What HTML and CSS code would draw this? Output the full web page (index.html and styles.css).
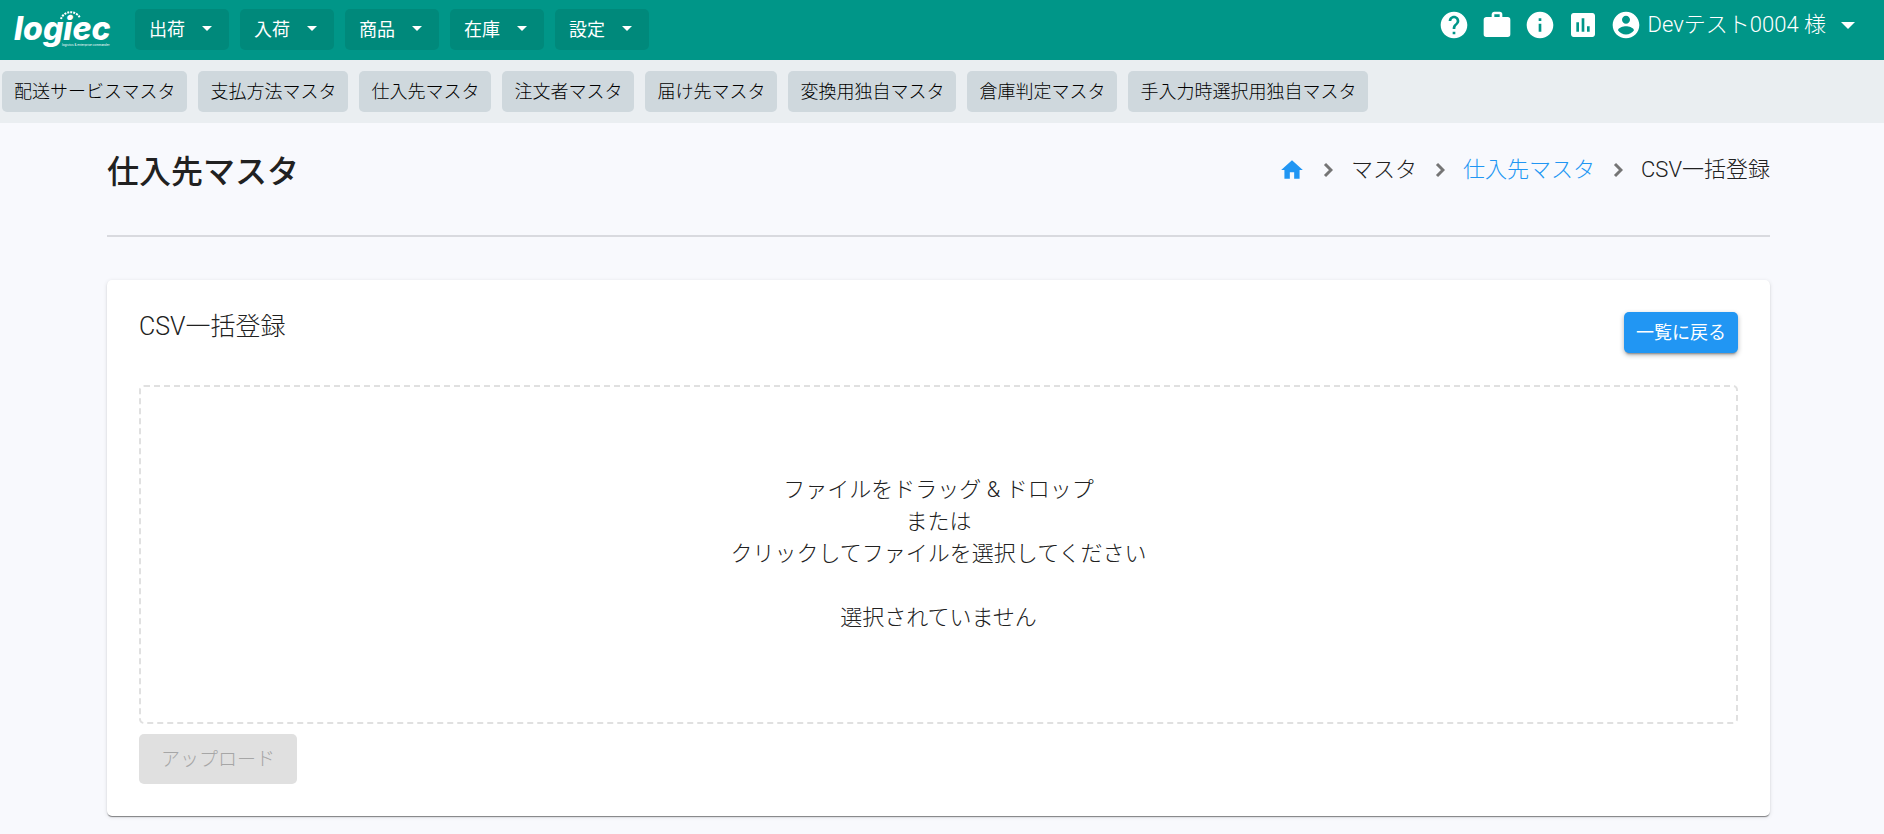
FILE: index.html
```html
<!DOCTYPE html>
<html lang="ja">
<head>
<meta charset="utf-8">
<meta name="viewport" content="width=device-width, initial-scale=1">
<title>仕入先マスタ | CSV一括登録</title>
<link rel="stylesheet" href="styles.css">
</head>
<body>
<header class="topbar">
  <a class="logo" href="#" aria-label="logiec">
    <svg width="106" height="60" viewBox="0 0 106 60">
      <path class="logo-arc" d="M51 19A10 9 0 0 1 70 18"/>
      <text class="logo-name" x="4" y="40">logiec</text>
      <text class="logo-tag" x="52" y="46">logistics &amp; enterprise commander</text>
    </svg>
  </a>
  <nav class="menu">
    <button class="menu-button" type="button">出荷<span class="caret"></span></button>
    <button class="menu-button" type="button">入荷<span class="caret"></span></button>
    <button class="menu-button" type="button">商品<span class="caret"></span></button>
    <button class="menu-button" type="button">在庫<span class="caret"></span></button>
    <button class="menu-button" type="button">設定<span class="caret"></span></button>
  </nav>
  <div class="tools">
    <a class="tool" href="#" aria-label="ヘルプ"><svg viewBox="0 0 24 24"><path d="M12 2C6.480 2 2 6.480 2 12s4.480 10 10 10 10-4.480 10-10S17.520 2 12 2zm1 17h-2v-2h2v2zm2.070-7.750l-.9.920C13.450 12.900 13 13.500 13 15h-2v-.5c0-1.100.45-2.100 1.170-2.830l1.240-1.260c.37-.36.59-.86.59-1.410 0-1.100-.9-2-2-2s-2 .9-2 2H8c0-2.210 1.790-4 4-4s4 1.790 4 4c0 .88-.36 1.680-.93 2.250z"/></svg></a>
    <a class="tool" href="#" aria-label="業務"><svg viewBox="0 0 24 24"><path d="M10 2h4a2 2 0 0 1 2 2v2h4a2 2 0 0 1 2 2v11a2 2 0 0 1-2 2H4a2 2 0 0 1-2-2V8c0-1.110.89-2 2-2h4V4c0-1.110.89-2 2-2m4 4V4h-4v2h4z"/></svg></a>
    <a class="tool" href="#" aria-label="お知らせ"><svg viewBox="0 0 24 24"><path d="M12 2C6.480 2 2 6.480 2 12s4.480 10 10 10 10-4.480 10-10S17.520 2 12 2zm1 15h-2v-6h2v6zm0-8h-2V7h2v2z"/></svg></a>
    <a class="tool" href="#" aria-label="統計"><svg viewBox="0 0 24 24"><path d="M19 3H5c-1.100 0-2 .9-2 2v14c0 1.100.9 2 2 2h14c1.100 0 2-.9 2-2V5c0-1.100-.9-2-2-2zM9 17H7v-7h2v7zm4 0h-2V7h2v10zm4 0h-2v-4h2v4z"/></svg></a>
    <button class="user" type="button">
      <svg viewBox="0 0 24 24"><path d="M12 2C6.480 2 2 6.480 2 12s4.480 10 10 10 10-4.480 10-10S17.520 2 12 2zm0 3c1.660 0 3 1.340 3 3s-1.340 3-3 3-3-1.340-3-3 1.340-3 3-3zm0 14.200c-2.500 0-4.710-1.280-6-3.220.03-1.990 4-3.080 6-3.080 1.990 0 5.970 1.090 6 3.080-1.290 1.940-3.500 3.220-6 3.220z"/></svg>
      <span>Devテスト0004 様</span><span class="caret"></span>
    </button>
  </div>
</header>
<nav class="subnav">
  <a class="chip" href="#">配送サービスマスタ</a>
  <a class="chip" href="#">支払方法マスタ</a>
  <a class="chip" href="#">仕入先マスタ</a>
  <a class="chip" href="#">注文者マスタ</a>
  <a class="chip" href="#">届け先マスタ</a>
  <a class="chip" href="#">変換用独自マスタ</a>
  <a class="chip" href="#">倉庫判定マスタ</a>
  <a class="chip" href="#">手入力時選択用独自マスタ</a>
</nav>
<main class="page">
  <div class="page-head">
    <h1 class="page-title">仕入先マスタ</h1>
    <nav class="breadcrumb">
      <a class="home" href="#" aria-label="ホーム"><svg width="26" height="26" viewBox="0 0 24 24"><path d="M10 20v-6h4v6h5v-8h3L12 3 2 12h3v8z"/></svg></a>
      <svg class="chevron" viewBox="0 0 10 16"><path d="M2 2l6 6-6 6"/></svg>
      <span>マスタ</span>
      <svg class="chevron" viewBox="0 0 10 16"><path d="M2 2l6 6-6 6"/></svg>
      <a class="crumb-link" href="#">仕入先マスタ</a>
      <svg class="chevron" viewBox="0 0 10 16"><path d="M2 2l6 6-6 6"/></svg>
      <span>CSV一括登録</span>
    </nav>
  </div>
  <section class="card">
    <div class="card-head">
      <h2 class="card-title">CSV一括登録</h2>
      <button class="back" type="button">一覧に戻る</button>
    </div>
    <button class="dropzone" type="button">
      <span>ファイルをドラッグ &amp; ドロップ</span>
      <span>または</span>
      <span>クリックしてファイルを選択してください</span>
      <span class="status">選択されていません</span>
    </button>
    <button class="upload" type="button" disabled>アップロード</button>
  </section>
</main>
</body>
</html>
```
FILE: styles.css
```css
* { box-sizing: border-box; }

body {
  margin: 0;
  min-height: 100vh;
  background: #f8f9fd;
  color: #212121;
  font-family: Roboto, "Noto Sans CJK JP", sans-serif;
  font-size: 22px;
  font-weight: 300;
}

button { border: 0; font: inherit; color: inherit; cursor: pointer; }
a { color: inherit; text-decoration: none; }

.topbar {
  display: flex;
  align-items: flex-start;
  height: 60px;
  padding: 0 29px 0 10px;
  background: #009688;
  color: #fff;
}
.logo { margin-right: 19px; }
.logo svg { display: block; }
.logo-name { fill: #fff; font: italic 800 32px Inter, sans-serif; }
.logo-tag { fill: #fff; font: 3px Inter, sans-serif; }
.logo-arc { fill: none; stroke: #fff; stroke-width: 2; stroke-dasharray: 2 1; }

.menu { display: flex; gap: 11px; padding-top: 9px; }
.menu-button {
  display: flex;
  align-items: center;
  gap: 17px;
  height: 41px;
  padding: 0 17px 3px 14px;
  border-radius: 5px;
  background: #00897b;
  font-size: 18px;
  font-weight: 400;
}
.caret { border: 5px solid transparent; border-top-color: currentColor; border-bottom: 0; }

.tools { display: flex; align-items: center; gap: 11px; margin-left: auto; padding-top: 9px; }
.tools svg { display: block; width: 32px; height: 32px; fill: #fff; }
.user {
  display: flex;
  align-items: center;
  gap: 6px;
  padding: 0;
  background: none;
  line-height: 32px;
}
.user .caret { border-width: 7px 7px 0; margin-left: 9px; }

.subnav {
  display: flex;
  gap: 11px;
  padding: 11px 2px;
  background: #eaeef1;
}
.chip {
  height: 41px;
  padding: 0 12px;
  border-radius: 5px;
  background: #cfd8dd;
  color: #000;
  font-size: 18px;
  line-height: 41px;
  white-space: nowrap;
}

.page { padding: 24px 114px 18px 107px; }
.page-head {
  display: flex;
  justify-content: space-between;
  align-items: flex-start;
  height: 90px;
  border-bottom: 2px solid #d9dadf;
}
.page-title { margin: 0; font-size: 32px; font-weight: 500; line-height: 50px; }
.breadcrumb { display: flex; align-items: center; line-height: 46px; }
.home { display: flex; }
.home svg { fill: #2196f3; }
.chevron { width: 10px; height: 16px; margin: 0 18px; fill: none; stroke: #757575; stroke-width: 3; }
.crumb-link { color: #2196f3; }

.card {
  margin-top: 43px;
  padding: 32px;
  border-radius: 5px;
  background: #fff;
  box-shadow: 0 2px 1px -1px rgba(0, 0, 0, .3), 0 1px 1px rgba(0, 0, 0, .2), 0 1px 4px rgba(0, 0, 0, .12);
}
.card-head { display: flex; justify-content: space-between; align-items: flex-start; }
.card-title { margin: 0; font-size: 25px; font-weight: 300; line-height: 30px; }
.back {
  height: 41px;
  padding: 0 12px 3px;
  border-radius: 5px;
  background: #2196f3;
  color: #fff;
  font-size: 18px;
  font-weight: 400;
  box-shadow: 0 3px 2px -2px rgba(0, 0, 0, .3), 0 2px 5px rgba(0, 0, 0, .3);
}
.dropzone {
  display: flex;
  flex-direction: column;
  align-items: center;
  width: 100%;
  margin-top: 32px;
  padding: 87px 16px 88px;
  border: 2px dashed #e0e0e0;
  border-radius: 5px;
  background: #fff;
  line-height: 32px;
}
.status { margin-top: 32px; }
.upload {
  display: block;
  height: 50px;
  margin-top: 10px;
  padding: 0 22px 4px;
  border-radius: 5px;
  background: #e0e0e0;
  color: #a6a6a6;
  font-size: 19px;
  cursor: default;
}
```
